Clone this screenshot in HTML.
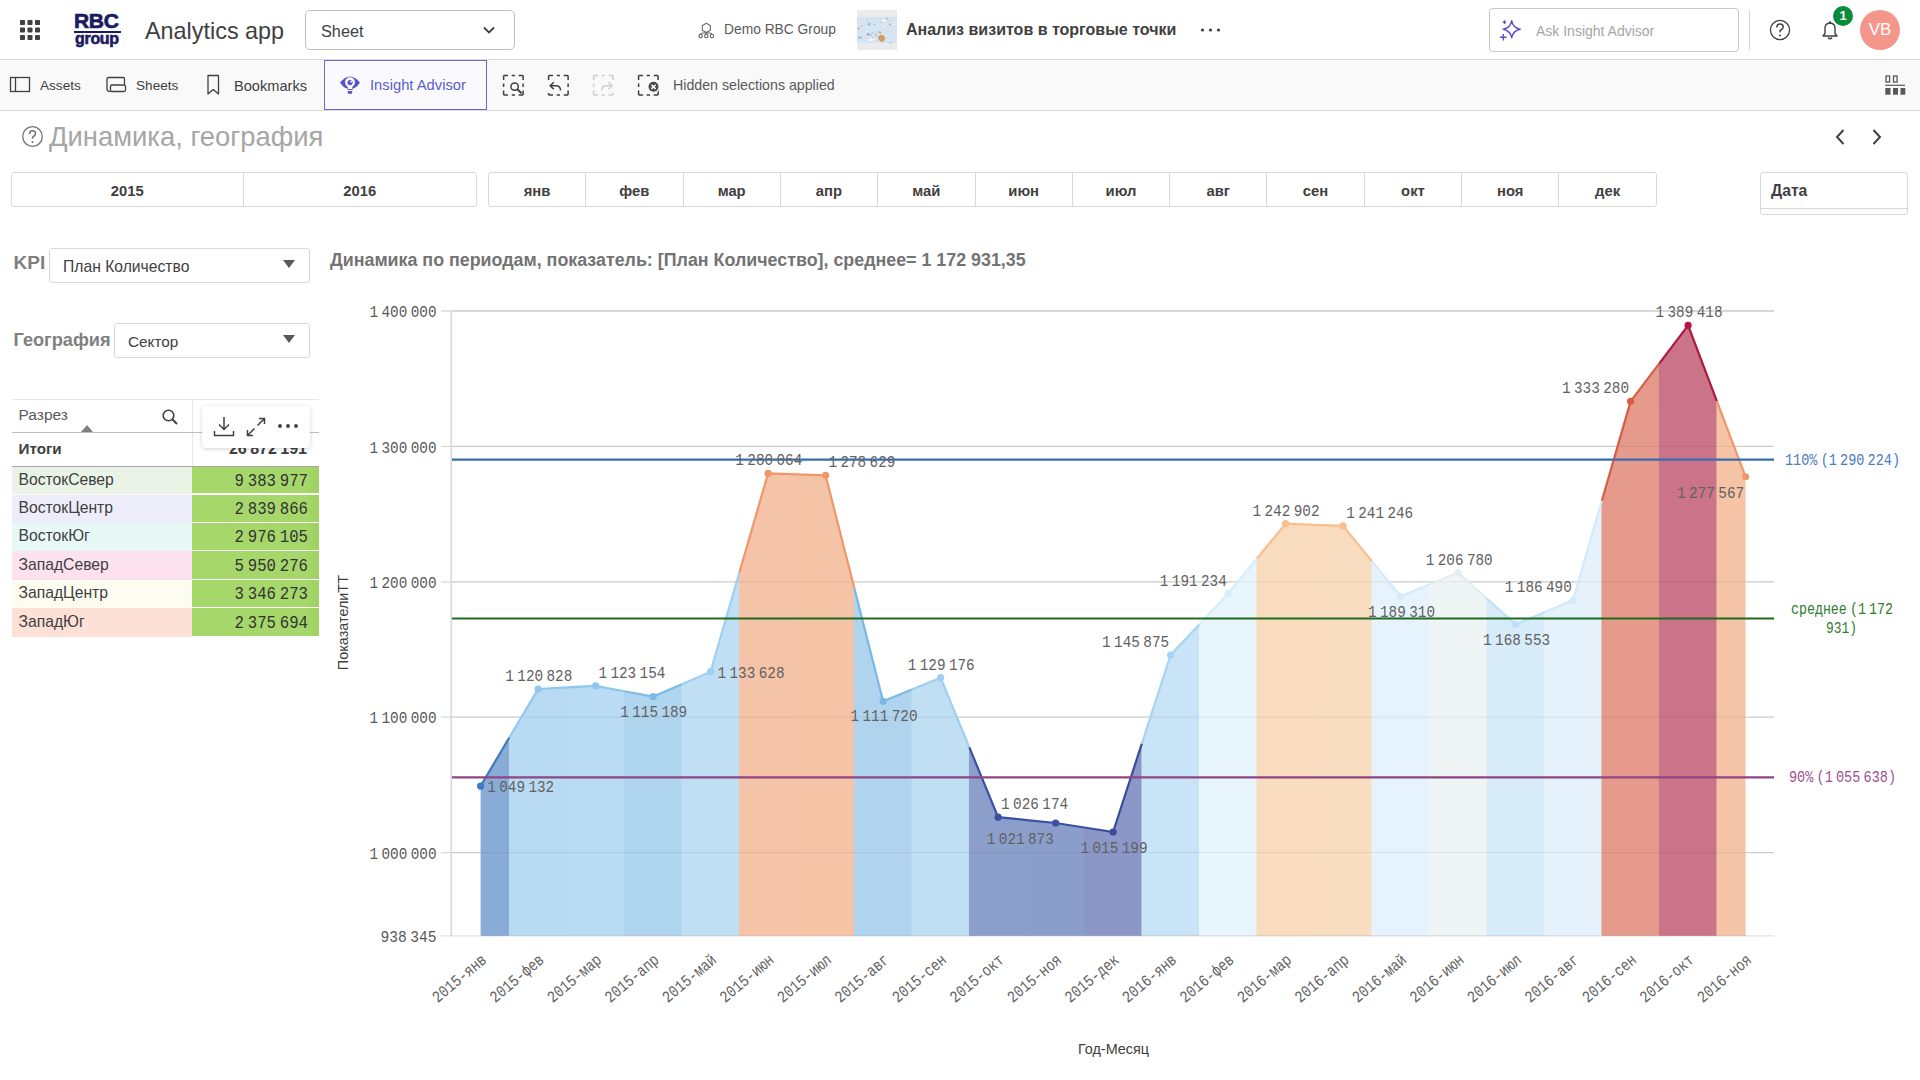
<!DOCTYPE html>
<html><head><meta charset="utf-8"><title>Analytics app</title><style>
*{margin:0;padding:0;box-sizing:border-box}
html,body{width:1920px;height:1080px;overflow:hidden;background:#fff;font-family:"Liberation Sans", sans-serif;color:#404040}
.a{position:absolute;white-space:nowrap}
.t{position:absolute;white-space:nowrap;line-height:20px}
</style></head>
<body>
<div class="a" style="left:0;top:0;width:1920px;height:59px;background:#fff"></div>
<div class="a" style="left:0;top:59px;width:1920px;height:1px;background:#d9d9d9"></div>
<svg class="a" style="left:0;top:0" width="60" height="60"><rect x="20.0" y="20.0" width="5" height="5" rx="0.8" fill="#404040"/><rect x="20.0" y="27.5" width="5" height="5" rx="0.8" fill="#404040"/><rect x="20.0" y="35.0" width="5" height="5" rx="0.8" fill="#404040"/><rect x="27.5" y="20.0" width="5" height="5" rx="0.8" fill="#404040"/><rect x="27.5" y="27.5" width="5" height="5" rx="0.8" fill="#404040"/><rect x="27.5" y="35.0" width="5" height="5" rx="0.8" fill="#404040"/><rect x="35.0" y="20.0" width="5" height="5" rx="0.8" fill="#404040"/><rect x="35.0" y="27.5" width="5" height="5" rx="0.8" fill="#404040"/><rect x="35.0" y="35.0" width="5" height="5" rx="0.8" fill="#404040"/></svg>
<div class="a" style="left:74px;top:9px;width:48px;font-weight:700;font-size:21px;line-height:24px;color:#1b1b5f;letter-spacing:-0.3px;-webkit-text-stroke:0.7px #1b1b5f;top:9px">RBC</div>
<div class="a" style="left:74px;top:31px;width:47px;height:2px;background:#1b1b5f"></div>
<div class="a" style="left:75px;top:30px;font-weight:700;font-size:16px;line-height:18px;color:#1b1b5f;letter-spacing:-0.3px;-webkit-text-stroke:0.6px #1b1b5f">group</div>
<div class="t" style="left:145px;top:16px;font-size:23.4px;line-height:30px;color:#404040">Analytics app</div>
<div class="a" style="left:305px;top:10px;width:210px;height:40px;border:1px solid #bfbfbf;border-radius:5px;background:#fff"></div>
<div class="t" style="left:321px;top:21px;font-size:16.3px;color:#404040">Sheet</div>
<svg class="a" style="left:482px;top:24px" width="14" height="12"><path d="M2 3.5 L7 8.5 L12 3.5" fill="none" stroke="#404040" stroke-width="1.8"/></svg>
<svg class="a" style="left:696px;top:18px" width="22" height="24"><g fill="none" stroke="#666" stroke-width="1.1"><path d="M10.3 5.3 L14.3 7.6 V12.2 L10.3 14.5 L6.3 12.2 V7.6 Z"/><path d="M10.3 14.5 V16 M4.6 16.2 Q4.6 14.7 10.3 14.7 Q16 14.7 16 16.2 M10.3 14.5 V16.2"/><circle cx="4.6" cy="18" r="1.7"/><circle cx="10.3" cy="18" r="1.7"/><circle cx="16" cy="18" r="1.7"/></g></svg>
<div class="t" style="left:724px;top:20px;font-size:13.8px;color:#595959">Demo RBC Group</div>
<div class="a" style="left:857px;top:10px;width:40px;height:40px;background:#e8ecef"></div>
<svg class="a" style="left:857px;top:10px" width="40" height="40"><rect width="40" height="40" rx="3" fill="#ebebeb"/><rect x="0" y="7" width="40" height="26" fill="#d6e4f2"/><circle cx="10.0" cy="21.6" r="0.7" fill="#ffffff"/><circle cx="19.0" cy="22.5" r="0.9" fill="#c8dcee"/><circle cx="10.9" cy="13.9" r="1.2" fill="#c8dcee"/><circle cx="21.6" cy="21.7" r="0.7" fill="#9cbfe0"/><circle cx="9.8" cy="11.8" r="1.1" fill="#c8dcee"/><circle cx="29.2" cy="24.8" r="0.5" fill="#ffffff"/><circle cx="2.6" cy="27.5" r="1.1" fill="#7fa8d6"/><circle cx="19.0" cy="26.0" r="1.1" fill="#c8dcee"/><circle cx="16.0" cy="28.0" r="0.8" fill="#9cbfe0"/><circle cx="34.4" cy="10.4" r="0.5" fill="#9cbfe0"/><circle cx="10.8" cy="24.8" r="1.0" fill="#7fa8d6"/><circle cx="17.0" cy="28.8" r="0.9" fill="#ffffff"/><circle cx="23.2" cy="22.6" r="1.1" fill="#e0a070"/><circle cx="33.5" cy="32.8" r="0.9" fill="#9cbfe0"/><circle cx="27.5" cy="16.2" r="0.8" fill="#ffffff"/><circle cx="22.6" cy="25.8" r="0.6" fill="#ffffff"/><circle cx="11.1" cy="11.1" r="0.8" fill="#c8dcee"/><circle cx="4.4" cy="28.0" r="0.7" fill="#9cbfe0"/><circle cx="1.8" cy="18.7" r="0.7" fill="#e0a070"/><circle cx="2.7" cy="23.4" r="0.4" fill="#ffffff"/><circle cx="13.6" cy="30.0" r="1.2" fill="#ffffff"/><circle cx="10.0" cy="8.9" r="0.4" fill="#e0a070"/><circle cx="23.8" cy="8.8" r="0.6" fill="#c8dcee"/><circle cx="12.1" cy="14.6" r="1.0" fill="#7fa8d6"/><circle cx="12.9" cy="32.0" r="1.1" fill="#c8dcee"/><circle cx="15.3" cy="29.7" r="0.7" fill="#ffffff"/><circle cx="26.9" cy="10.6" r="1.2" fill="#ffffff"/><circle cx="11.3" cy="23.9" r="1.0" fill="#7fa8d6"/><circle cx="17.6" cy="14.5" r="0.6" fill="#7fa8d6"/><circle cx="1.4" cy="18.4" r="0.9" fill="#e0a070"/><circle cx="15.3" cy="22.7" r="0.5" fill="#7fa8d6"/><circle cx="18.7" cy="25.0" r="0.7" fill="#7fa8d6"/><circle cx="29.0" cy="8.6" r="0.4" fill="#e0a070"/><circle cx="37.6" cy="14.3" r="0.8" fill="#ffffff"/><circle cx="23.9" cy="12.4" r="0.5" fill="#7fa8d6"/><circle cx="33.1" cy="14.6" r="1.0" fill="#e0a070"/><circle cx="30.3" cy="8.7" r="0.9" fill="#9cbfe0"/><circle cx="12.8" cy="13.6" r="1.0" fill="#9cbfe0"/><circle cx="13.5" cy="25.0" r="0.9" fill="#e0a070"/><circle cx="4.9" cy="16.0" r="0.7" fill="#9cbfe0"/><path d="M21 27 Q24 23 27 26 Q30 29 25 32 Q21 31 21 27 Z" fill="#d99a60"/></svg>
<div class="t" style="left:906px;top:20px;font-size:16px;font-weight:700;color:#404040">Анализ визитов в торговые точки</div>
<svg class="a" style="left:1198px;top:24px" width="26" height="12"><circle cx="4.5" cy="6" r="1.6" fill="#404040"/><circle cx="12.5" cy="6" r="1.6" fill="#404040"/><circle cx="20.5" cy="6" r="1.6" fill="#404040"/></svg>
<div class="a" style="left:1489px;top:8px;width:250px;height:44px;border:1px solid #c8c8c8;border-radius:4px;background:#fff"></div>
<svg class="a" style="left:1496px;top:15px" width="30" height="30"><path d="M15.7 5.8 Q17 12.8 24.2 14.2 Q17 15.6 15.7 22.7 Q14.4 15.6 7.2 14.2 Q14.4 12.8 15.7 5.8 Z" fill="none" stroke="#5a50c8" stroke-width="1.5" stroke-linejoin="round"/><path d="M7.3 19 V25.5 M4 22.3 H10.6" stroke="#5a50c8" stroke-width="1.4"/><path d="M8.5 5.3 V8.9 M6.7 7.1 H10.3" stroke="#5a50c8" stroke-width="1.4"/></svg>
<div class="t" style="left:1536px;top:21px;font-size:14px;color:#a6a6a6">Ask Insight Advisor</div>
<div class="a" style="left:1749px;top:10px;width:1px;height:40px;background:#d9d9d9"></div>
<svg class="a" style="left:1766px;top:16px" width="28" height="28"><circle cx="14" cy="14" r="9.6" fill="none" stroke="#404040" stroke-width="1.3"/><path d="M10.8 11.5 Q10.8 8 14 8 Q17.2 8 17.2 11 Q17.2 13 14.8 14 Q14 14.5 14 16.3" fill="none" stroke="#404040" stroke-width="1.5"/><circle cx="14" cy="19.5" r="1" fill="#404040"/></svg>
<svg class="a" style="left:1816px;top:16px" width="28" height="28"><path d="M7 20 H21 L19 17.5 V12 Q19 7.5 14 7 Q9 7.5 9 12 V17.5 Z" fill="none" stroke="#404040" stroke-width="1.4" stroke-linejoin="round"/><path d="M12 21.5 Q14 24 16 21.5" fill="none" stroke="#404040" stroke-width="1.4"/><path d="M14 5 V7" stroke="#404040" stroke-width="1.4"/></svg>
<div class="a" style="left:1833px;top:6px;width:20px;height:20px;border-radius:50%;background:#0a8a3b;color:#fff;font-size:13px;font-weight:700;line-height:20px;text-align:center">1</div>
<div class="a" style="left:1860px;top:10px;width:40px;height:40px;border-radius:50%;background:#f3978a;color:#fff;font-size:17px;line-height:40px;text-align:center">VB</div>
<div class="a" style="left:0;top:60px;width:1920px;height:50px;background:#f9f9f9"></div>
<div class="a" style="left:0;top:110px;width:1920px;height:1px;background:#d9d9d9"></div>
<svg class="a" style="left:8px;top:75px" width="24" height="20"><rect x="2.5" y="2.5" width="19" height="14" fill="none" stroke="#404040" stroke-width="1.3"/><path d="M7.5 2.5 V16.5" fill="none" stroke="#404040" stroke-width="1.3"/></svg>
<div class="t" style="left:40px;top:75.5px;font-size:13.6px;color:#404040">Assets</div>
<svg class="a" style="left:104px;top:75px" width="24" height="20"><path d="M3 14 V4 Q3 2.5 4.5 2.5 H19 Q20.5 2.5 20.5 4 V9.5" fill="none" stroke="#404040" stroke-width="1.3"/><rect x="6.5" y="10" width="15" height="6.5" rx="1.5" fill="none" stroke="#404040" stroke-width="1.3"/><path d="M3 14 Q3 16.5 6.5 16.5" fill="none" stroke="#404040" stroke-width="1.3"/></svg>
<div class="t" style="left:136px;top:75.5px;font-size:13.6px;color:#404040">Sheets</div>
<svg class="a" style="left:203px;top:73px" width="20" height="24"><path d="M5 2.5 H15.5 V21 L10.2 16.5 L5 21 Z" fill="none" stroke="#404040" stroke-width="1.3" stroke-linejoin="round"/></svg>
<div class="t" style="left:234px;top:75.5px;font-size:14.6px;color:#404040">Bookmarks</div>
<div class="a" style="left:324px;top:60px;width:163px;height:50px;border:1px solid #6a6ad0;background:#fafafe"></div>
<svg class="a" style="left:334px;top:70px" width="30" height="30"><path d="M6 12.5 Q16 0.5 26 12.5 Q22.5 17.8 18.8 18.6 L18.3 20 H13.7 L13.2 18.6 Q9.5 17.8 6 12.5 Z" fill="#5b52c9"/><circle cx="16" cy="12.3" r="5" fill="#fafafe"/><path d="M13.2 14.5 H18.8 L18 19 H14 Z" fill="#fafafe"/><circle cx="16" cy="12.6" r="2.6" fill="#5b52c9"/><circle cx="17.1" cy="11.6" r="0.95" fill="#fafafe"/><path d="M13.6 21 H18.4 L17.9 23.8 H14.1 Z" fill="#5b52c9"/></svg>
<div class="t" style="left:370px;top:75px;font-size:14.75px;color:#5a5fc8">Insight Advisor</div>
<svg class="a" style="left:501.5px;top:73.8px" width="24" height="24"><rect x="1.6" y="1.5" width="19.5" height="19.5" fill="none" stroke="#404040" stroke-width="1.5" stroke-dasharray="4.4 3.7 3.3 3.7 4.4 0"/><rect x="7" y="7" width="11" height="11" fill="#f9f9f9"/><circle cx="12.6" cy="12.6" r="3.7" fill="none" stroke="#404040" stroke-width="1.5"/><path d="M15.3 15.3 L19.5 19.3" stroke="#404040" stroke-width="2"/></svg>
<svg class="a" style="left:546.5px;top:73.8px" width="24" height="24"><rect x="1.6" y="1.5" width="19.5" height="19.5" fill="none" stroke="#404040" stroke-width="1.5" stroke-dasharray="4.4 3.7 3.3 3.7 4.4 0"/><rect x="0" y="7" width="15" height="12" fill="#f9f9f9"/><path d="M6.8 8.2 L3.2 11.7 L6.8 15.2 M3.2 11.7 H9 Q13.5 11.7 13.5 16.5" fill="none" stroke="#404040" stroke-width="1.5"/></svg>
<svg class="a" style="left:591.5px;top:73.8px" width="24" height="24"><rect x="1.6" y="1.5" width="19.5" height="19.5" fill="none" stroke="#cfcfcf" stroke-width="1.5" stroke-dasharray="4.4 3.7 3.3 3.7 4.4 0"/><rect x="8" y="7" width="16" height="12" fill="#f9f9f9"/><path d="M16.4 8.2 L20 11.7 L16.4 15.2 M20 11.7 H14.2 Q9.7 11.7 9.7 16.5" fill="none" stroke="#cfcfcf" stroke-width="1.5"/></svg>
<svg class="a" style="left:636.5px;top:73.8px" width="24" height="24"><rect x="1.6" y="1.5" width="19.5" height="19.5" fill="none" stroke="#404040" stroke-width="1.5" stroke-dasharray="4.4 3.7 3.3 3.7 4.4 0"/><circle cx="16.5" cy="12.8" r="6.2" fill="#f9f9f9"/><circle cx="16.5" cy="12.8" r="5" fill="#4a4a4a"/><path d="M14.4 10.7 L18.6 14.9 M18.6 10.7 L14.4 14.9" stroke="#fff" stroke-width="1.5"/></svg>
<div class="t" style="left:673px;top:75px;font-size:14.2px;color:#595959">Hidden selections applied</div>
<svg class="a" style="left:1882px;top:74px" width="24" height="24"><g fill="none" stroke="#595959" stroke-width="1.3"><rect x="4" y="2" width="3.6" height="6"/><rect x="11.5" y="2" width="3.6" height="6"/></g><path d="M3.2 11.3 H23" stroke="#595959" stroke-width="1.2"/><g fill="#595959"><rect x="3.3" y="14" width="5.2" height="6.7"/><rect x="11" y="14" width="5" height="6.7"/><rect x="18.5" y="14" width="4.8" height="6.7"/></g></svg>
<svg class="a" style="left:20px;top:124px" width="26" height="26"><circle cx="12.5" cy="12.5" r="9.8" fill="none" stroke="#737373" stroke-width="1.3"/><path d="M9.5 10 Q9.5 6.8 12.5 6.8 Q15.5 6.8 15.5 9.6 Q15.5 11.5 13.3 12.5 Q12.5 13 12.5 14.8" fill="none" stroke="#737373" stroke-width="1.5"/><circle cx="12.5" cy="18" r="1" fill="#737373"/></svg>
<div class="t" style="left:49px;top:121px;font-size:27.4px;line-height:32px;color:#a6a6a6">Динамика, география</div>
<svg class="a" style="left:1828px;top:126px" width="60" height="22"><path d="M15.5 4 L9 11 L15.5 18" fill="none" stroke="#404040" stroke-width="2"/><path d="M45.5 4 L52 11 L45.5 18" fill="none" stroke="#404040" stroke-width="2"/></svg>
<div class="a" style="left:11px;top:172px;width:466px;height:35px;border:1px solid #d9d9d9;border-radius:3px;background:#fff"></div>
<div class="a" style="left:243px;top:173px;width:1px;height:33px;background:#d9d9d9"></div>
<div class="t" style="left:11.0px;top:180px;width:232.5px;text-align:center;font-size:14.8px;font-weight:700;color:#404040;line-height:22px">2015</div>
<div class="t" style="left:243.5px;top:180px;width:232.5px;text-align:center;font-size:14.8px;font-weight:700;color:#404040;line-height:22px">2016</div>
<div class="a" style="left:488px;top:172px;width:1168.5px;height:35px;border:1px solid #d9d9d9;border-radius:3px;background:#fff"></div>
<div class="t" style="left:488.3px;top:180px;width:97.33px;text-align:center;font-size:14.8px;font-weight:700;color:#404040;line-height:22px">янв</div>
<div class="a" style="left:585.1px;top:173px;width:1px;height:33px;background:#d9d9d9"></div>
<div class="t" style="left:585.6px;top:180px;width:97.33px;text-align:center;font-size:14.8px;font-weight:700;color:#404040;line-height:22px">фев</div>
<div class="a" style="left:682.5px;top:173px;width:1px;height:33px;background:#d9d9d9"></div>
<div class="t" style="left:683.0px;top:180px;width:97.33px;text-align:center;font-size:14.8px;font-weight:700;color:#404040;line-height:22px">мар</div>
<div class="a" style="left:779.8px;top:173px;width:1px;height:33px;background:#d9d9d9"></div>
<div class="t" style="left:780.3px;top:180px;width:97.33px;text-align:center;font-size:14.8px;font-weight:700;color:#404040;line-height:22px">апр</div>
<div class="a" style="left:877.1px;top:173px;width:1px;height:33px;background:#d9d9d9"></div>
<div class="t" style="left:877.6px;top:180px;width:97.33px;text-align:center;font-size:14.8px;font-weight:700;color:#404040;line-height:22px">май</div>
<div class="a" style="left:974.5px;top:173px;width:1px;height:33px;background:#d9d9d9"></div>
<div class="t" style="left:975.0px;top:180px;width:97.33px;text-align:center;font-size:14.8px;font-weight:700;color:#404040;line-height:22px">июн</div>
<div class="a" style="left:1071.8px;top:173px;width:1px;height:33px;background:#d9d9d9"></div>
<div class="t" style="left:1072.3px;top:180px;width:97.33px;text-align:center;font-size:14.8px;font-weight:700;color:#404040;line-height:22px">июл</div>
<div class="a" style="left:1169.1px;top:173px;width:1px;height:33px;background:#d9d9d9"></div>
<div class="t" style="left:1169.6px;top:180px;width:97.33px;text-align:center;font-size:14.8px;font-weight:700;color:#404040;line-height:22px">авг</div>
<div class="a" style="left:1266.4px;top:173px;width:1px;height:33px;background:#d9d9d9"></div>
<div class="t" style="left:1266.9px;top:180px;width:97.33px;text-align:center;font-size:14.8px;font-weight:700;color:#404040;line-height:22px">сен</div>
<div class="a" style="left:1363.8px;top:173px;width:1px;height:33px;background:#d9d9d9"></div>
<div class="t" style="left:1364.3px;top:180px;width:97.33px;text-align:center;font-size:14.8px;font-weight:700;color:#404040;line-height:22px">окт</div>
<div class="a" style="left:1461.1px;top:173px;width:1px;height:33px;background:#d9d9d9"></div>
<div class="t" style="left:1461.6px;top:180px;width:97.33px;text-align:center;font-size:14.8px;font-weight:700;color:#404040;line-height:22px">ноя</div>
<div class="a" style="left:1558.4px;top:173px;width:1px;height:33px;background:#d9d9d9"></div>
<div class="t" style="left:1558.9px;top:180px;width:97.33px;text-align:center;font-size:14.8px;font-weight:700;color:#404040;line-height:22px">дек</div>
<div class="a" style="left:1760px;top:172px;width:148px;height:43px;border:1px solid #d9d9d9;border-radius:3px;background:#fff"></div>
<div class="a" style="left:1761px;top:208px;width:146px;height:1px;background:#d9d9d9"></div>
<div class="t" style="left:1771px;top:180px;font-size:15.7px;font-weight:700;color:#404040;line-height:22px">Дата</div>
<div class="t" style="left:13.5px;top:252px;font-size:19px;font-weight:700;color:#7f7f7f;line-height:22px">KPI</div>
<div class="a" style="left:49px;top:248px;width:261px;height:35px;border:1px solid #d9d9d9;border-radius:3px;background:#fff"></div>
<div class="t" style="left:63px;top:256px;font-size:15.7px;color:#404040;line-height:22px">План Количество</div>
<svg class="a" style="left:282px;top:259px" width="14" height="10"><path d="M1 1 H13 L7 9 Z" fill="#595959"/></svg>
<div class="t" style="left:13.5px;top:329px;font-size:18.2px;font-weight:700;color:#7f7f7f;line-height:22px">География</div>
<div class="a" style="left:114px;top:323px;width:196px;height:35px;border:1px solid #d9d9d9;border-radius:3px;background:#fff"></div>
<div class="t" style="left:128px;top:331px;font-size:15.3px;color:#404040;line-height:22px">Сектор</div>
<svg class="a" style="left:282px;top:334px" width="14" height="10"><path d="M1 1 H13 L7 9 Z" fill="#595959"/></svg>
<svg class="a" style="left:0;top:0" width="1920" height="1080" font-family="Liberation Mono, monospace">
<path d="M441 311.0 H1774" stroke="#d9d9d9" stroke-width="1.3"/>
<path d="M441 446.4 H1774" stroke="#d9d9d9" stroke-width="1.3"/>
<path d="M441 581.8 H1774" stroke="#d9d9d9" stroke-width="1.3"/>
<path d="M441 717.2 H1774" stroke="#d9d9d9" stroke-width="1.3"/>
<path d="M441 852.6 H1774" stroke="#d9d9d9" stroke-width="1.3"/>
<polygon points="480.60,935.80 480.60,786.08 480.60,786.08 509.75,736.86 509.75,935.80" fill="#89acd7"/>
<polygon points="508.95,935.80 508.95,738.21 538.10,689.00 567.25,687.40 567.25,935.80" fill="#b8daf2"/>
<polygon points="566.45,935.80 566.45,687.45 595.60,685.85 624.75,691.32 624.75,935.80" fill="#b9dbf3"/>
<polygon points="623.95,935.80 623.95,691.17 653.10,696.63 682.25,683.98 682.25,935.80" fill="#b0d5ef"/>
<polygon points="681.45,935.80 681.45,684.32 710.60,671.67 739.75,571.15 739.75,935.80" fill="#c0dff4"/>
<polygon points="738.95,935.80 738.95,573.91 768.10,473.39 797.25,474.38 797.25,935.80" fill="#f5c3a7"/>
<polygon points="796.45,935.80 796.45,474.35 825.60,475.34 854.75,589.91 854.75,935.80" fill="#f5c4a7"/>
<polygon points="853.95,935.80 853.95,586.76 883.10,701.33 912.25,689.35 912.25,935.80" fill="#b0d4ee"/>
<polygon points="911.45,935.80 911.45,689.68 940.60,677.70 969.75,748.40 969.75,935.80" fill="#c0dff3"/>
<polygon points="968.95,935.80 968.95,746.46 998.10,817.16 1027.25,820.11 1027.25,935.80" fill="#8c9fcb"/>
<polygon points="1026.45,935.80 1026.45,820.03 1055.60,822.98 1084.75,827.57 1084.75,935.80" fill="#8b9dcb"/>
<polygon points="1083.95,935.80 1083.95,827.44 1113.10,832.02 1142.25,742.32 1142.25,935.80" fill="#8b97c7"/>
<polygon points="1141.45,935.80 1141.45,744.78 1170.60,655.09 1199.75,623.95 1199.75,935.80" fill="#c9e4f6"/>
<polygon points="1198.95,935.80 1198.95,624.80 1228.10,593.67 1257.25,558.20 1257.25,935.80" fill="#e8f5fd"/>
<polygon points="1256.45,935.80 1256.45,559.18 1285.60,523.71 1314.75,524.85 1314.75,935.80" fill="#f9dcbd"/>
<polygon points="1313.95,935.80 1313.95,524.82 1343.10,525.95 1372.25,561.60 1372.25,935.80" fill="#f9ddc0"/>
<polygon points="1371.45,935.80 1371.45,560.62 1400.60,596.27 1429.75,584.28 1429.75,935.80" fill="#e6f3fc"/>
<polygon points="1428.95,935.80 1428.95,584.61 1458.10,572.62 1487.25,598.86 1487.25,935.80" fill="#eff5f5"/>
<polygon points="1486.45,935.80 1486.45,598.14 1515.60,624.38 1544.75,612.07 1544.75,935.80" fill="#d8ebf9"/>
<polygon points="1543.95,935.80 1543.95,612.40 1573.10,600.09 1602.25,499.33 1602.25,935.80" fill="#e5f2fb"/>
<polygon points="1601.45,935.80 1601.45,502.10 1630.60,401.34 1659.75,362.80 1659.75,935.80" fill="#e59a8b"/>
<polygon points="1658.95,935.80 1658.95,363.86 1688.10,325.33 1717.25,402.10 1717.25,935.80" fill="#cb7389"/>
<polygon points="1716.45,935.80 1716.45,400.00 1745.60,476.77 1745.60,476.77 1745.60,935.80" fill="#f5c4a6"/>
<path d="M452 311.0 H1774" stroke="rgba(0,0,0,0.06)" stroke-width="1.3"/>
<path d="M452 446.4 H1774" stroke="rgba(0,0,0,0.06)" stroke-width="1.3"/>
<path d="M452 581.8 H1774" stroke="rgba(0,0,0,0.06)" stroke-width="1.3"/>
<path d="M452 717.2 H1774" stroke="rgba(0,0,0,0.06)" stroke-width="1.3"/>
<path d="M452 852.6 H1774" stroke="rgba(0,0,0,0.06)" stroke-width="1.3"/>
<path d="M441 935.8 H1774" stroke="rgba(0,0,0,0.12)" stroke-width="1.3"/>
<path d="M451.2 310 V936" stroke="#d9d9d9" stroke-width="1.6"/>
<polyline points="480.60,786.08 480.60,786.08 509.35,737.54" fill="none" stroke="#3c7bc0" stroke-width="2.2" stroke-linejoin="round"/>
<polyline points="509.35,737.54 538.10,689.00 566.85,687.42" fill="none" stroke="#8fc7ee" stroke-width="2.2" stroke-linejoin="round"/>
<polyline points="566.85,687.42 595.60,685.85 624.35,691.24" fill="none" stroke="#8fc7ee" stroke-width="2.2" stroke-linejoin="round"/>
<polyline points="624.35,691.24 653.10,696.63 681.85,684.15" fill="none" stroke="#7dbce8" stroke-width="2.2" stroke-linejoin="round"/>
<polyline points="681.85,684.15 710.60,671.67 739.35,572.53" fill="none" stroke="#9dd0f2" stroke-width="2.2" stroke-linejoin="round"/>
<polyline points="739.35,572.53 768.10,473.39 796.85,474.36" fill="none" stroke="#f0966b" stroke-width="2.2" stroke-linejoin="round"/>
<polyline points="796.85,474.36 825.60,475.34 854.35,588.33" fill="none" stroke="#f0966b" stroke-width="2.2" stroke-linejoin="round"/>
<polyline points="854.35,588.33 883.10,701.33 911.85,689.51" fill="none" stroke="#7ab9e6" stroke-width="2.2" stroke-linejoin="round"/>
<polyline points="911.85,689.51 940.60,677.70 969.35,747.43" fill="none" stroke="#9ccff2" stroke-width="2.2" stroke-linejoin="round"/>
<polyline points="969.35,747.43 998.10,817.16 1026.85,820.07" fill="none" stroke="#3a50a3" stroke-width="2.2" stroke-linejoin="round"/>
<polyline points="1026.85,820.07 1055.60,822.98 1084.35,827.50" fill="none" stroke="#3a50a3" stroke-width="2.2" stroke-linejoin="round"/>
<polyline points="1084.35,827.50 1113.10,832.02 1141.85,743.55" fill="none" stroke="#3a4a9c" stroke-width="2.2" stroke-linejoin="round"/>
<polyline points="1141.85,743.55 1170.60,655.09 1199.35,624.38" fill="none" stroke="#a5d5f4" stroke-width="2.2" stroke-linejoin="round"/>
<polyline points="1199.35,624.38 1228.10,593.67 1256.85,558.69" fill="none" stroke="#d6edfb" stroke-width="2.2" stroke-linejoin="round"/>
<polyline points="1256.85,558.69 1285.60,523.71 1314.35,524.83" fill="none" stroke="#f7bf8c" stroke-width="2.2" stroke-linejoin="round"/>
<polyline points="1314.35,524.83 1343.10,525.95 1371.85,561.11" fill="none" stroke="#f7bf8c" stroke-width="2.2" stroke-linejoin="round"/>
<polyline points="1371.85,561.11 1400.60,596.27 1429.35,584.45" fill="none" stroke="#d3ebfa" stroke-width="2.2" stroke-linejoin="round"/>
<polyline points="1429.35,584.45 1458.10,572.62 1486.85,598.50" fill="none" stroke="#e3ecee" stroke-width="2.2" stroke-linejoin="round"/>
<polyline points="1486.85,598.50 1515.60,624.38 1544.35,612.24" fill="none" stroke="#bfe0f7" stroke-width="2.2" stroke-linejoin="round"/>
<polyline points="1544.35,612.24 1573.10,600.09 1601.85,500.72" fill="none" stroke="#d2eafa" stroke-width="2.2" stroke-linejoin="round"/>
<polyline points="1601.85,500.72 1630.60,401.34 1659.35,363.33" fill="none" stroke="#d95c45" stroke-width="2.2" stroke-linejoin="round"/>
<polyline points="1659.35,363.33 1688.10,325.33 1716.85,401.05" fill="none" stroke="#b0183f" stroke-width="2.2" stroke-linejoin="round"/>
<polyline points="1716.85,401.05 1745.60,476.77 1745.60,476.77" fill="none" stroke="#f0966b" stroke-width="2.2" stroke-linejoin="round"/>
<circle cx="480.60" cy="786.08" r="3.6" fill="#3c7bc0"/>
<circle cx="538.10" cy="689.00" r="3.6" fill="#8fc7ee"/>
<circle cx="595.60" cy="685.85" r="3.6" fill="#8fc7ee"/>
<circle cx="653.10" cy="696.63" r="3.6" fill="#7dbce8"/>
<circle cx="710.60" cy="671.67" r="3.6" fill="#9dd0f2"/>
<circle cx="768.10" cy="473.39" r="3.6" fill="#f0966b"/>
<circle cx="825.60" cy="475.34" r="3.6" fill="#f0966b"/>
<circle cx="883.10" cy="701.33" r="3.6" fill="#7ab9e6"/>
<circle cx="940.60" cy="677.70" r="3.6" fill="#9ccff2"/>
<circle cx="998.10" cy="817.16" r="3.6" fill="#3a50a3"/>
<circle cx="1055.60" cy="822.98" r="3.6" fill="#3a50a3"/>
<circle cx="1113.10" cy="832.02" r="3.6" fill="#3a4a9c"/>
<circle cx="1170.60" cy="655.09" r="3.6" fill="#a5d5f4"/>
<circle cx="1228.10" cy="593.67" r="3.6" fill="#d6edfb"/>
<circle cx="1285.60" cy="523.71" r="3.6" fill="#f7bf8c"/>
<circle cx="1343.10" cy="525.95" r="3.6" fill="#f7bf8c"/>
<circle cx="1400.60" cy="596.27" r="3.6" fill="#d3ebfa"/>
<circle cx="1458.10" cy="572.62" r="3.6" fill="#e3ecee"/>
<circle cx="1515.60" cy="624.38" r="3.6" fill="#bfe0f7"/>
<circle cx="1573.10" cy="600.09" r="3.6" fill="#d2eafa"/>
<circle cx="1630.60" cy="401.34" r="3.6" fill="#d95c45"/>
<circle cx="1688.10" cy="325.33" r="3.6" fill="#b0183f"/>
<circle cx="1745.60" cy="476.77" r="3.6" fill="#f0966b"/>
<path d="M452 459.6 H1774" stroke="#3a6db0" stroke-width="2.2"/>
<path d="M452 618.5 H1774" stroke="#1e6a1e" stroke-width="2.2"/>
<path d="M452 777.3 H1774" stroke="#8e4585" stroke-width="2.2"/>
<text x="436.5" y="317.2" text-anchor="end" font-size="16" word-spacing="-5.8" fill="#595959" textLength="67" lengthAdjust="spacingAndGlyphs">1 400 000</text>
<text x="436.5" y="452.6" text-anchor="end" font-size="16" word-spacing="-5.8" fill="#595959" textLength="67" lengthAdjust="spacingAndGlyphs">1 300 000</text>
<text x="436.5" y="588.0" text-anchor="end" font-size="16" word-spacing="-5.8" fill="#595959" textLength="67" lengthAdjust="spacingAndGlyphs">1 200 000</text>
<text x="436.5" y="723.4" text-anchor="end" font-size="16" word-spacing="-5.8" fill="#595959" textLength="67" lengthAdjust="spacingAndGlyphs">1 100 000</text>
<text x="436.5" y="858.8" text-anchor="end" font-size="16" word-spacing="-5.8" fill="#595959" textLength="67" lengthAdjust="spacingAndGlyphs">1 000 000</text>
<text x="436.5" y="942.3" text-anchor="end" font-size="16" word-spacing="-5.8" fill="#595959" textLength="56" lengthAdjust="spacingAndGlyphs">938 345</text>
<text x="520.7" y="791.5" text-anchor="middle" font-size="16" word-spacing="-5.8" fill="#626262" textLength="67" lengthAdjust="spacingAndGlyphs">1 049 132</text>
<text x="538.8" y="680.8" text-anchor="middle" font-size="16" word-spacing="-5.8" fill="#626262" textLength="67" lengthAdjust="spacingAndGlyphs">1 120 828</text>
<text x="631.9" y="677.5" text-anchor="middle" font-size="16" word-spacing="-5.8" fill="#626262" textLength="67" lengthAdjust="spacingAndGlyphs">1 123 154</text>
<text x="653.7" y="716.7" text-anchor="middle" font-size="16" word-spacing="-5.8" fill="#626262" textLength="67" lengthAdjust="spacingAndGlyphs">1 115 189</text>
<text x="751.0" y="677.5" text-anchor="middle" font-size="16" word-spacing="-5.8" fill="#626262" textLength="67" lengthAdjust="spacingAndGlyphs">1 133 628</text>
<text x="768.8" y="464.8" text-anchor="middle" font-size="16" word-spacing="-5.8" fill="#626262" textLength="67" lengthAdjust="spacingAndGlyphs">1 280 064</text>
<text x="861.9" y="466.8" text-anchor="middle" font-size="16" word-spacing="-5.8" fill="#626262" textLength="67" lengthAdjust="spacingAndGlyphs">1 278 629</text>
<text x="884.0" y="721.4" text-anchor="middle" font-size="16" word-spacing="-5.8" fill="#626262" textLength="67" lengthAdjust="spacingAndGlyphs">1 111 720</text>
<text x="941.2" y="669.9" text-anchor="middle" font-size="16" word-spacing="-5.8" fill="#626262" textLength="67" lengthAdjust="spacingAndGlyphs">1 129 176</text>
<text x="1034.6" y="808.8" text-anchor="middle" font-size="16" word-spacing="-5.8" fill="#626262" textLength="67" lengthAdjust="spacingAndGlyphs">1 026 174</text>
<text x="1020.3" y="844.0" text-anchor="middle" font-size="16" word-spacing="-5.8" fill="#626262" textLength="67" lengthAdjust="spacingAndGlyphs">1 021 873</text>
<text x="1114.0" y="852.5" text-anchor="middle" font-size="16" word-spacing="-5.8" fill="#626262" textLength="67" lengthAdjust="spacingAndGlyphs">1 015 199</text>
<text x="1135.6" y="646.8" text-anchor="middle" font-size="16" word-spacing="-5.8" fill="#626262" textLength="67" lengthAdjust="spacingAndGlyphs">1 145 875</text>
<text x="1193.3" y="585.7" text-anchor="middle" font-size="16" word-spacing="-5.8" fill="#626262" textLength="67" lengthAdjust="spacingAndGlyphs">1 191 234</text>
<text x="1286.0" y="515.8" text-anchor="middle" font-size="16" word-spacing="-5.8" fill="#626262" textLength="67" lengthAdjust="spacingAndGlyphs">1 242 902</text>
<text x="1379.7" y="517.9" text-anchor="middle" font-size="16" word-spacing="-5.8" fill="#626262" textLength="67" lengthAdjust="spacingAndGlyphs">1 241 246</text>
<text x="1401.5" y="616.5" text-anchor="middle" font-size="16" word-spacing="-5.8" fill="#626262" textLength="67" lengthAdjust="spacingAndGlyphs">1 189 310</text>
<text x="1459.2" y="565.0" text-anchor="middle" font-size="16" word-spacing="-5.8" fill="#626262" textLength="67" lengthAdjust="spacingAndGlyphs">1 206 780</text>
<text x="1516.6" y="644.6" text-anchor="middle" font-size="16" word-spacing="-5.8" fill="#626262" textLength="67" lengthAdjust="spacingAndGlyphs">1 168 553</text>
<text x="1538.3" y="591.8" text-anchor="middle" font-size="16" word-spacing="-5.8" fill="#626262" textLength="67" lengthAdjust="spacingAndGlyphs">1 186 490</text>
<text x="1595.5" y="392.8" text-anchor="middle" font-size="16" word-spacing="-5.8" fill="#626262" textLength="67" lengthAdjust="spacingAndGlyphs">1 333 280</text>
<text x="1689.0" y="317.0" text-anchor="middle" font-size="16" word-spacing="-5.8" fill="#626262" textLength="67" lengthAdjust="spacingAndGlyphs">1 389 418</text>
<text x="1710.6" y="497.9" text-anchor="middle" font-size="16" word-spacing="-5.8" fill="#626262" textLength="67" lengthAdjust="spacingAndGlyphs">1 277 567</text>
<text x="1842.5" y="464.6" text-anchor="middle" font-size="16" word-spacing="-5.8" fill="#4a7bbd" textLength="115" lengthAdjust="spacingAndGlyphs">110% (1 290 224)</text>
<text x="1842" y="614" text-anchor="middle" font-size="16" word-spacing="-5.8" fill="#2e7d32" textLength="102" lengthAdjust="spacingAndGlyphs">среднее (1 172</text>
<text x="1841.5" y="633" text-anchor="middle" font-size="16" fill="#2e7d32" textLength="31" lengthAdjust="spacingAndGlyphs">931)</text>
<text x="1842.5" y="782.3" text-anchor="middle" font-size="16" word-spacing="-5.8" fill="#9c4f94" textLength="107" lengthAdjust="spacingAndGlyphs">90% (1 055 638)</text>
<text x="487.6" y="961.5" text-anchor="end" font-size="16.5" fill="#626262" transform="rotate(-40 487.6 961.5)" textLength="65" lengthAdjust="spacingAndGlyphs">2015-янв</text>
<text x="545.1" y="961.5" text-anchor="end" font-size="16.5" fill="#626262" transform="rotate(-40 545.1 961.5)" textLength="65" lengthAdjust="spacingAndGlyphs">2015-фев</text>
<text x="602.6" y="961.5" text-anchor="end" font-size="16.5" fill="#626262" transform="rotate(-40 602.6 961.5)" textLength="65" lengthAdjust="spacingAndGlyphs">2015-мар</text>
<text x="660.1" y="961.5" text-anchor="end" font-size="16.5" fill="#626262" transform="rotate(-40 660.1 961.5)" textLength="65" lengthAdjust="spacingAndGlyphs">2015-апр</text>
<text x="717.6" y="961.5" text-anchor="end" font-size="16.5" fill="#626262" transform="rotate(-40 717.6 961.5)" textLength="65" lengthAdjust="spacingAndGlyphs">2015-май</text>
<text x="775.1" y="961.5" text-anchor="end" font-size="16.5" fill="#626262" transform="rotate(-40 775.1 961.5)" textLength="65" lengthAdjust="spacingAndGlyphs">2015-июн</text>
<text x="832.6" y="961.5" text-anchor="end" font-size="16.5" fill="#626262" transform="rotate(-40 832.6 961.5)" textLength="65" lengthAdjust="spacingAndGlyphs">2015-июл</text>
<text x="890.1" y="961.5" text-anchor="end" font-size="16.5" fill="#626262" transform="rotate(-40 890.1 961.5)" textLength="65" lengthAdjust="spacingAndGlyphs">2015-авг</text>
<text x="947.6" y="961.5" text-anchor="end" font-size="16.5" fill="#626262" transform="rotate(-40 947.6 961.5)" textLength="65" lengthAdjust="spacingAndGlyphs">2015-сен</text>
<text x="1005.1" y="961.5" text-anchor="end" font-size="16.5" fill="#626262" transform="rotate(-40 1005.1 961.5)" textLength="65" lengthAdjust="spacingAndGlyphs">2015-окт</text>
<text x="1062.6" y="961.5" text-anchor="end" font-size="16.5" fill="#626262" transform="rotate(-40 1062.6 961.5)" textLength="65" lengthAdjust="spacingAndGlyphs">2015-ноя</text>
<text x="1120.1" y="961.5" text-anchor="end" font-size="16.5" fill="#626262" transform="rotate(-40 1120.1 961.5)" textLength="65" lengthAdjust="spacingAndGlyphs">2015-дек</text>
<text x="1177.6" y="961.5" text-anchor="end" font-size="16.5" fill="#626262" transform="rotate(-40 1177.6 961.5)" textLength="65" lengthAdjust="spacingAndGlyphs">2016-янв</text>
<text x="1235.1" y="961.5" text-anchor="end" font-size="16.5" fill="#626262" transform="rotate(-40 1235.1 961.5)" textLength="65" lengthAdjust="spacingAndGlyphs">2016-фев</text>
<text x="1292.6" y="961.5" text-anchor="end" font-size="16.5" fill="#626262" transform="rotate(-40 1292.6 961.5)" textLength="65" lengthAdjust="spacingAndGlyphs">2016-мар</text>
<text x="1350.1" y="961.5" text-anchor="end" font-size="16.5" fill="#626262" transform="rotate(-40 1350.1 961.5)" textLength="65" lengthAdjust="spacingAndGlyphs">2016-апр</text>
<text x="1407.6" y="961.5" text-anchor="end" font-size="16.5" fill="#626262" transform="rotate(-40 1407.6 961.5)" textLength="65" lengthAdjust="spacingAndGlyphs">2016-май</text>
<text x="1465.1" y="961.5" text-anchor="end" font-size="16.5" fill="#626262" transform="rotate(-40 1465.1 961.5)" textLength="65" lengthAdjust="spacingAndGlyphs">2016-июн</text>
<text x="1522.6" y="961.5" text-anchor="end" font-size="16.5" fill="#626262" transform="rotate(-40 1522.6 961.5)" textLength="65" lengthAdjust="spacingAndGlyphs">2016-июл</text>
<text x="1580.1" y="961.5" text-anchor="end" font-size="16.5" fill="#626262" transform="rotate(-40 1580.1 961.5)" textLength="65" lengthAdjust="spacingAndGlyphs">2016-авг</text>
<text x="1637.6" y="961.5" text-anchor="end" font-size="16.5" fill="#626262" transform="rotate(-40 1637.6 961.5)" textLength="65" lengthAdjust="spacingAndGlyphs">2016-сен</text>
<text x="1695.1" y="961.5" text-anchor="end" font-size="16.5" fill="#626262" transform="rotate(-40 1695.1 961.5)" textLength="65" lengthAdjust="spacingAndGlyphs">2016-окт</text>
<text x="1752.6" y="961.5" text-anchor="end" font-size="16.5" fill="#626262" transform="rotate(-40 1752.6 961.5)" textLength="65" lengthAdjust="spacingAndGlyphs">2016-ноя</text>
<text x="1113.5" y="1054" text-anchor="middle" font-family="Liberation Sans, sans-serif" font-size="14.4" fill="#404040">Год-Месяц</text>
<text x="348" y="622.6" text-anchor="middle" font-family="Liberation Sans, sans-serif" font-size="14.4" fill="#404040" transform="rotate(-90 348 622.6)">ПоказателиТТ</text>
</svg>
<div class="t" style="left:330px;top:249px;font-size:17.85px;font-weight:700;color:#737373;line-height:22px">Динамика по периодам, показатель: [План Количество], среднее= 1 172 931,35</div>
<div class="a" style="left:12px;top:399px;width:307px;height:1px;background:#e6e6e6"></div>
<div class="a" style="left:192px;top:400px;width:1px;height:66px;background:#e6e6e6"></div>
<div class="t" style="left:18.5px;top:404px;font-size:15.5px;color:#595959;line-height:22px">Разрез</div>
<svg class="a" style="left:159px;top:406px" width="22" height="22"><circle cx="9.5" cy="9.5" r="5.3" fill="none" stroke="#404040" stroke-width="1.6"/><path d="M13.5 13.5 L18 18" stroke="#404040" stroke-width="2"/></svg>
<svg class="a" style="left:80px;top:421px" width="14" height="12"><path d="M1 11 L7 4 L13 11 Z" fill="#7f7f7f"/></svg>
<div class="a" style="left:12px;top:432px;width:307px;height:1px;background:#bfbfbf"></div>
<div class="t" style="left:18.5px;top:437.5px;font-size:15.2px;font-weight:700;color:#404040;line-height:22px">Итоги</div>
<div class="t" style="left:193px;top:438px;width:114px;text-align:right;font-size:16px;font-weight:700;word-spacing:-1px;color:#404040;line-height:22px">26 872 191</div>
<div class="a" style="left:12px;top:466px;width:307px;height:1.5px;background:#a6a6a6"></div>
<div class="a" style="left:12px;top:467.3px;width:180px;height:27.19999999999999px;background:#e9f4e6"></div>
<div class="a" style="left:192.4px;top:467.3px;width:126.6px;height:25.99999999999999px;background:linear-gradient(90deg,#a5d76a 0%,#a5d76a 90%,#9dd161 100%)"></div>
<div class="t" style="left:18.5px;top:468.9px;font-size:15.7px;color:#404040;line-height:22px">ВостокСевер</div>
<div class="t" style="left:200px;top:469.9px;width:108px;text-align:right;font-family:'Liberation Mono',monospace;font-size:17.5px;word-spacing:-6.25px;transform:scaleX(0.895);transform-origin:100% 50%;color:#333;line-height:22px">9 383 977</div>
<div class="a" style="left:12px;top:494.5px;width:180px;height:28.700000000000045px;background:#ededf9"></div>
<div class="a" style="left:192.4px;top:494.5px;width:126.6px;height:27.500000000000046px;background:linear-gradient(90deg,#a5d76a 0%,#a5d76a 90%,#9dd161 100%)"></div>
<div class="t" style="left:18.5px;top:496.9px;font-size:15.7px;color:#404040;line-height:22px">ВостокЦентр</div>
<div class="t" style="left:200px;top:497.9px;width:108px;text-align:right;font-family:'Liberation Mono',monospace;font-size:17.5px;word-spacing:-6.25px;transform:scaleX(0.895);transform-origin:100% 50%;color:#333;line-height:22px">2 839 866</div>
<div class="a" style="left:12px;top:523.2px;width:180px;height:28.09999999999991px;background:#e8f8f7"></div>
<div class="a" style="left:192.4px;top:523.2px;width:126.6px;height:26.89999999999991px;background:linear-gradient(90deg,#a5d76a 0%,#a5d76a 90%,#9dd161 100%)"></div>
<div class="t" style="left:18.5px;top:525.2px;font-size:15.7px;color:#404040;line-height:22px">ВостокЮг</div>
<div class="t" style="left:200px;top:526.2px;width:108px;text-align:right;font-family:'Liberation Mono',monospace;font-size:17.5px;word-spacing:-6.25px;transform:scaleX(0.895);transform-origin:100% 50%;color:#333;line-height:22px">2 976 105</div>
<div class="a" style="left:12px;top:551.3px;width:180px;height:28.90000000000009px;background:#fde1ef"></div>
<div class="a" style="left:192.4px;top:551.3px;width:126.6px;height:27.70000000000009px;background:linear-gradient(90deg,#a5d76a 0%,#a5d76a 90%,#9dd161 100%)"></div>
<div class="t" style="left:18.5px;top:553.8px;font-size:15.7px;color:#404040;line-height:22px">ЗападСевер</div>
<div class="t" style="left:200px;top:554.8px;width:108px;text-align:right;font-family:'Liberation Mono',monospace;font-size:17.5px;word-spacing:-6.25px;transform:scaleX(0.895);transform-origin:100% 50%;color:#333;line-height:22px">5 950 276</div>
<div class="a" style="left:12px;top:580.2px;width:180px;height:28.199999999999932px;background:#fcfdf0"></div>
<div class="a" style="left:192.4px;top:580.2px;width:126.6px;height:26.999999999999932px;background:linear-gradient(90deg,#a5d76a 0%,#a5d76a 90%,#9dd161 100%)"></div>
<div class="t" style="left:18.5px;top:582.3px;font-size:15.7px;color:#404040;line-height:22px">ЗападЦентр</div>
<div class="t" style="left:200px;top:583.3px;width:108px;text-align:right;font-family:'Liberation Mono',monospace;font-size:17.5px;word-spacing:-6.25px;transform:scaleX(0.895);transform-origin:100% 50%;color:#333;line-height:22px">3 346 273</div>
<div class="a" style="left:12px;top:608.4px;width:180px;height:28.399999999999977px;background:#fde0d6"></div>
<div class="a" style="left:192.4px;top:608.4px;width:126.6px;height:27.199999999999978px;background:linear-gradient(90deg,#a5d76a 0%,#a5d76a 90%,#9dd161 100%)"></div>
<div class="t" style="left:18.5px;top:610.6px;font-size:15.7px;color:#404040;line-height:22px">ЗападЮг</div>
<div class="t" style="left:200px;top:611.6px;width:108px;text-align:right;font-family:'Liberation Mono',monospace;font-size:17.5px;word-spacing:-6.25px;transform:scaleX(0.895);transform-origin:100% 50%;color:#333;line-height:22px">2 375 694</div>
<div class="a" style="left:202px;top:406px;width:108px;height:42px;background:#fff;border-radius:4px;box-shadow:0 1px 4px rgba(0,0,0,0.18)"></div>
<svg class="a" style="left:211px;top:414px" width="26" height="26"><path d="M13 3 V15 M8 10.5 L13 15.5 L18 10.5" fill="none" stroke="#404040" stroke-width="1.5"/><path d="M3.5 17 V21.5 H22.5 V17" fill="none" stroke="#404040" stroke-width="1.5"/></svg>
<svg class="a" style="left:243px;top:414px" width="26" height="26"><path d="M14.5 11.5 L21.5 4.5 M16 4.5 H21.5 V10 M11.5 14.5 L4.5 21.5 M4.5 16 V21.5 H10" fill="none" stroke="#404040" stroke-width="1.5"/></svg>
<svg class="a" style="left:276px;top:420px" width="26" height="12"><circle cx="4" cy="6" r="1.9" fill="#404040"/><circle cx="12" cy="6" r="1.9" fill="#404040"/><circle cx="20" cy="6" r="1.9" fill="#404040"/></svg>
</body></html>
